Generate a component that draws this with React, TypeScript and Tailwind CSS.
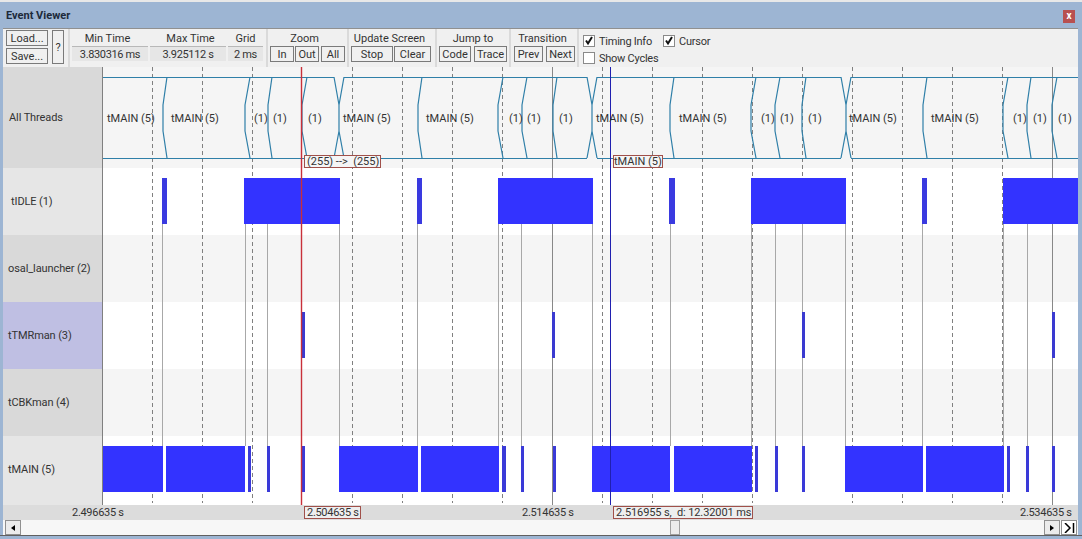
const grid = [152, 202, 252, 352, 402, 452, 502, 602, 652, 702, 752, 852, 902, 952, 1002];
const solid = [162, 245, 267, 339, 417, 498, 521, 592, 670, 751, 775, 802, 845, 922, 1003, 1027];
const idle = [[162, 5], [244, 96], [417, 5], [498, 95], [669, 6], [751, 95], [922, 5], [1003, 75]];
const tmr = [302, 552, 802, 1052];
const main = [[103, 60], [166, 79], [248, 3], [267, 3], [302, 3], [339, 79], [421, 78], [502, 4], [521, 3], [553, 3], [592, 78], [674, 78], [755, 3], [775, 3], [802, 3], [845, 78], [926, 78], [1007, 3], [1026, 3], [1052, 3]];
const trans = [[167, 163], [250, 245], [272, 268], [307, 302], [422, 418], [503, 498], [527, 522], [557, 553], [674, 670], [756, 751], [780, 775], [806, 802], [927, 923], [1008, 1003], [1031, 1027], [1057, 1052]];
const crosses = [[334, 339, 344], [587, 592, 597], [841, 846, 851]];
const spans = [[103, 334], [344, 587], [597, 841], [851, 1078]];
const labels = [
  [107, "tMAIN (5)"], [171, "tMAIN (5)"], [254, "(1)"], [273, "(1)"], [308, "(1)"], [343, "tMAIN (5)"], [426, "tMAIN (5)"], [509, "(1)"], [527, "(1)"], [559, "(1)"], [596, "tMAIN (5)"], [679, "tMAIN (5)"], [761, "(1)"], [780, "(1)"], [808, "(1)"], [849, "tMAIN (5)"], [931, "tMAIN (5)"], [1013, "(1)"], [1033, "(1)"], [1058, "(1)"],
] as const;

function Btn({ children, className = "" }: { children: React.ReactNode; className?: string }) {
  return <div className={`flex h-[16px] shrink-0 items-center justify-center border border-[#7a7a7a] bg-[#f0f0f0] pt-[1px] text-[11px] leading-none text-[#333] ${className}`}>{children}</div>;
}
function Sep({ className = "" }: { className?: string }) {
  return <div className={`h-[38px] w-[2px] shrink-0 bg-[#dadada] ${className}`} />;
}
function Title({ children, className = "" }: { children: React.ReactNode; className?: string }) {
  return <div className={`h-[16px] whitespace-nowrap text-center text-[11px] leading-[18px] text-[#333] ${className}`}>{children}</div>;
}
function Stat({ title, value, className = "", titleClass = "" }: { title: string; value: string; className?: string; titleClass?: string }) {
  return (
    <div className={`flex shrink-0 flex-col pt-[1px] ${className}`}>
      <Title className={titleClass}>{title}</Title>
      <div className="flex h-[15px] items-center justify-center border-t border-[#b8b8b8] bg-[#e6e6e6] pt-[1px] text-[11px] leading-none tracking-[-0.35px] text-[#333]">{value}</div>
    </div>
  );
}
function Check({ on, label, className = "" }: { on: boolean; label: string; className?: string }) {
  return (
    <div className={`flex items-center gap-[4px] ${className}`}>
      <div className="flex h-[12px] w-[12px] shrink-0 items-center justify-center border border-[#8a8a8a] bg-white">
        {on && <svg width="10" height="10" viewBox="0 0 10 10"><path d="M2 4.5 L4 7.5 L8 1" fill="none" stroke="#111" strokeWidth="2" /></svg>}
      </div>
      <span className="pt-[2px] text-[11px] leading-none tracking-[-0.25px] text-[#333]">{label}</span>
    </div>
  );
}
function Row({ label, h, labelBg, chartBg, indent = "pl-[5px] pt-[2px]" }: { label: string; h: string; labelBg: string; chartBg: string; indent?: string }) {
  return (
    <div className={`flex ${h} ${chartBg}`}>
      <div className={`flex w-[99px] items-center whitespace-nowrap text-[11px] tracking-[-0.1px] text-[#333] ${labelBg} ${indent}`}>{label}</div>
      <div className="w-[1px] bg-[#808080]" />
    </div>
  );
}
function Tag({ children, className }: { children: React.ReactNode; className: string }) {
  return <div className={`absolute flex h-[13px] items-center whitespace-pre border border-[#a0504a] leading-none text-[#333] ${className}`}>{children}</div>;
}

export default function App() {
  return (
    <div className="relative flex h-[539px] w-[1082px] flex-col overflow-hidden bg-[#9db5d3] font-['Roboto',sans-serif]">
      <div className="h-[2px] bg-[#e8e8e8]" />
      <div className="flex h-[26px] items-center justify-between pl-[6px] pr-[7px] pt-[2px]">
        <span className="text-[11px] font-bold text-[#1c2a3a]">Event Viewer</span>
        <div className="flex h-[13px] w-[12px] items-center justify-center bg-[#b85050] text-[10px] font-bold leading-none text-white">x</div>
      </div>
      <div className="ml-[3px] mr-[4px] flex flex-1 flex-col border-t border-[#909090] bg-[#f0f0f0]">
        <div className="flex h-[38px] bg-[#f0f0f0] pl-[3px]">
          <div className="flex w-[42px] shrink-0 flex-col gap-[2px] pt-[1px]">
            <Btn>Load...</Btn>
            <Btn>Save...</Btn>
          </div>
          <Btn className="ml-[4px] mt-[1px] h-[34px] w-[12px]">?</Btn>
          <Sep className="ml-[4px]" />
          <Stat title="Min Time" value="3.830316 ms" className="ml-[2px] w-[76px]" titleClass="pr-[5px]" />
          <Stat title="Max Time" value="3.925112 s" className="ml-[2px] w-[76px]" titleClass="pl-[5px]" />
          <Stat title="Grid" value="2 ms" className="ml-[2px] w-[35px]" />
          <Sep className="ml-[3px]" />
          <div className="ml-[2px] flex w-[75px] shrink-0 flex-col pt-[1px]">
            <Title className="pr-[6px]">Zoom</Title>
            <div className="flex">
              <Btn className="w-[24px]">In</Btn>
              <Btn className="ml-[1px] w-[24px]">Out</Btn>
              <Btn className="ml-[2px] w-[24px]">All</Btn>
            </div>
          </div>
          <Sep className="ml-[2px]" />
          <div className="ml-[2px] flex w-[80px] shrink-0 flex-col pt-[1px]">
            <Title className="pr-[3px]">Update Screen</Title>
            <div className="flex">
              <Btn className="w-[42px]">Stop</Btn>
              <Btn className="ml-[1px] w-[37px]">Clear</Btn>
            </div>
          </div>
          <Sep className="ml-[4px]" />
          <div className="ml-[2px] flex w-[68px] shrink-0 flex-col pt-[1px]">
            <Title>Jump to</Title>
            <div className="flex">
              <Btn className="w-[32px]">Code</Btn>
              <Btn className="ml-[3px] w-[33px]">Trace</Btn>
            </div>
          </div>
          <Sep className="ml-[2px]" />
          <div className="ml-[3px] flex w-[61px] shrink-0 flex-col pt-[1px]">
            <Title className="pr-[4px]">Transition</Title>
            <div className="flex">
              <Btn className="w-[29px]">Prev</Btn>
              <Btn className="ml-[3px] w-[29px]">Next</Btn>
            </div>
          </div>
          <Sep className="ml-[2px]" />
          <div className="ml-[4px] flex flex-col gap-[4px] pt-[5px]">
            <div className="flex">
              <Check on label="Timing Info" className="w-[80px]" />
              <Check on label="Cursor" />
            </div>
            <Check on={false} label="Show Cycles" />
          </div>
        </div>
        <div className="relative flex flex-1 flex-col bg-white">
          <Row label="All Threads" h="h-[101px]" labelBg="bg-[#d9d9d9]" chartBg="bg-[#f5f5f5]" indent="pl-[6px] pt-[2px]" />
          <Row label="tIDLE (1)" h="h-[67px]" labelBg="bg-[#e6e6e6]" chartBg="bg-white" indent="pl-[8px] pt-[2px]" />
          <Row label="osal_launcher (2)" h="h-[67px]" labelBg="bg-[#d9d9d9]" chartBg="bg-[#f5f5f5]" />
          <Row label="tTMRman (3)" h="h-[67px]" labelBg="bg-[#bfbfe3]" chartBg="bg-white" />
          <Row label="tCBKman (4)" h="h-[67px]" labelBg="bg-[#d9d9d9]" chartBg="bg-[#f5f5f5]" />
          <Row label="tMAIN (5)" h="h-[69px]" labelBg="bg-[#e6e6e6]" chartBg="bg-white" indent="pl-[5px]" />
          <div className="relative h-[15px] whitespace-nowrap bg-[#dcdcdc] pl-[69px] text-[11px] leading-[16px] tracking-[-0.3px] text-[#333]">
            2.496635 s
            <span className="absolute left-[519px] top-0">2.514635 s</span>
            <span className="absolute left-[1017px] top-0">2.534635 s</span>
          </div>
          <div className="relative flex h-[15px] items-stretch justify-between bg-[#f7f7f7] pl-[2px] pr-[1px]">
            <div className="flex w-[16px] items-center justify-center border border-[#909090] bg-[#ececec]">
              <svg width="4" height="6" viewBox="0 0 4 6"><path d="M4 0 L0 3 L4 6Z" fill="#000" /></svg>
            </div>
            <div className="absolute left-[667px] top-0 h-[15px] w-[10px] border border-[#a0a0a0] bg-[#ececec]" />
            <div className="flex gap-[1px]">
              <div className="flex w-[16px] items-center justify-center border border-[#909090] bg-[#ececec]">
                <svg width="4" height="6" viewBox="0 0 4 6"><path d="M0 0 L4 3 L0 6Z" fill="#000" /></svg>
              </div>
              <div className="flex w-[16px] items-center justify-center border border-[#909090] bg-white">
                <svg width="11" height="10" viewBox="0 0 11 10"><path d="M1 0 L6 5 L1 10 M9.5 0 V10" fill="none" stroke="#000" strokeWidth="1.5" /></svg>
              </div>
            </div>
          </div>

          <svg className="absolute left-0 top-0" width="1075" height="438" viewBox="3 67 1075 438">
            {grid.map((x) => <line key={x} x1={x + 0.5} x2={x + 0.5} y1={67} y2={503} stroke="#808080" strokeDasharray="4 3" />)}
            <line x1="802.5" x2="802.5" y1="67" y2="178" stroke="#808080" strokeDasharray="4 3" />
            {solid.map((x) => <line key={x} x1={x + 0.5} x2={x + 0.5} y1={224} y2={446} stroke="#a8a8a8" />)}
            <line x1="552.5" x2="552.5" y1="67" y2="505" stroke="#888888" />
            <line x1="1052.5" x2="1052.5" y1="67" y2="505" stroke="#888888" />
            {spans.map(([a, b]) => (
              <g key={a}>
                <line x1={a} x2={b} y1="77.5" y2="77.5" stroke="#2f7fa8" />
                <line x1={a} x2={b} y1="158.5" y2="158.5" stroke="#2f7fa8" />
              </g>
            ))}
            {trans.map(([t, m]) => <path key={t} d={`M${t} 77 L${m} 105 L${m} 131 L${t} 158`} fill="none" stroke="#2f7fa8" strokeWidth="1.2" />)}
            {crosses.map(([a, m, b]) => <path key={a} d={`M${a} 77 L${m} 105 L${m} 131 L${a} 158 M${b} 77 L${m} 105 L${m} 131 L${b} 158`} fill="none" stroke="#2f7fa8" strokeWidth="1.2" />)}
            {idle.map(([x, w]) => <rect key={x} x={x} y={178} width={w} height={46} fill={w > 10 ? "#3333ff" : "#3a3ae0"} />)}
            {tmr.map((x) => <rect key={x} x={x} y={312} width={3} height={46} fill="#3a3ad0" />)}
            {main.map(([x, w]) => <rect key={x} x={x} y={446} width={w} height={46} fill={w > 10 ? "#3333ff" : "#3a3ad8"} />)}
            <line x1="301.5" x2="301.5" y1="67" y2="505" stroke="#c8303a" strokeWidth="1.4" />
            <line x1="610.5" x2="610.5" y1="67" y2="505" stroke="#2020b0" />
            {labels.map(([x, t], i) => <text key={i} x={x} y={122} fontSize="11" fill="#333" fontFamily="Roboto">{t}</text>)}
          </svg>
          <Tag className="left-[301px] top-[88px] w-[77px] bg-[#f5f5f5] pl-[2px] text-[11px]">{"(255) -->  (255)"}</Tag>
          <Tag className="left-[610px] top-[88px] w-[50px] bg-[#f5f5f5] text-[11px]">tMAIN (5)</Tag>
          <Tag className="left-[301px] top-[439px] w-[57px] bg-[#eeeeee] pl-[2px] text-[11px] tracking-[-0.3px]">2.504635 s</Tag>
          <Tag className="left-[610px] top-[439px] w-[140px] bg-[#eeeeee] pl-[2px] text-[11px] tracking-[-0.1px]">2.516955 s,  d: 12.32001 ms</Tag>
        </div>
      </div>
      <div className="h-[1px] bg-[#606060]" />
      <div className="h-[3px]" />
    </div>
  );
}
